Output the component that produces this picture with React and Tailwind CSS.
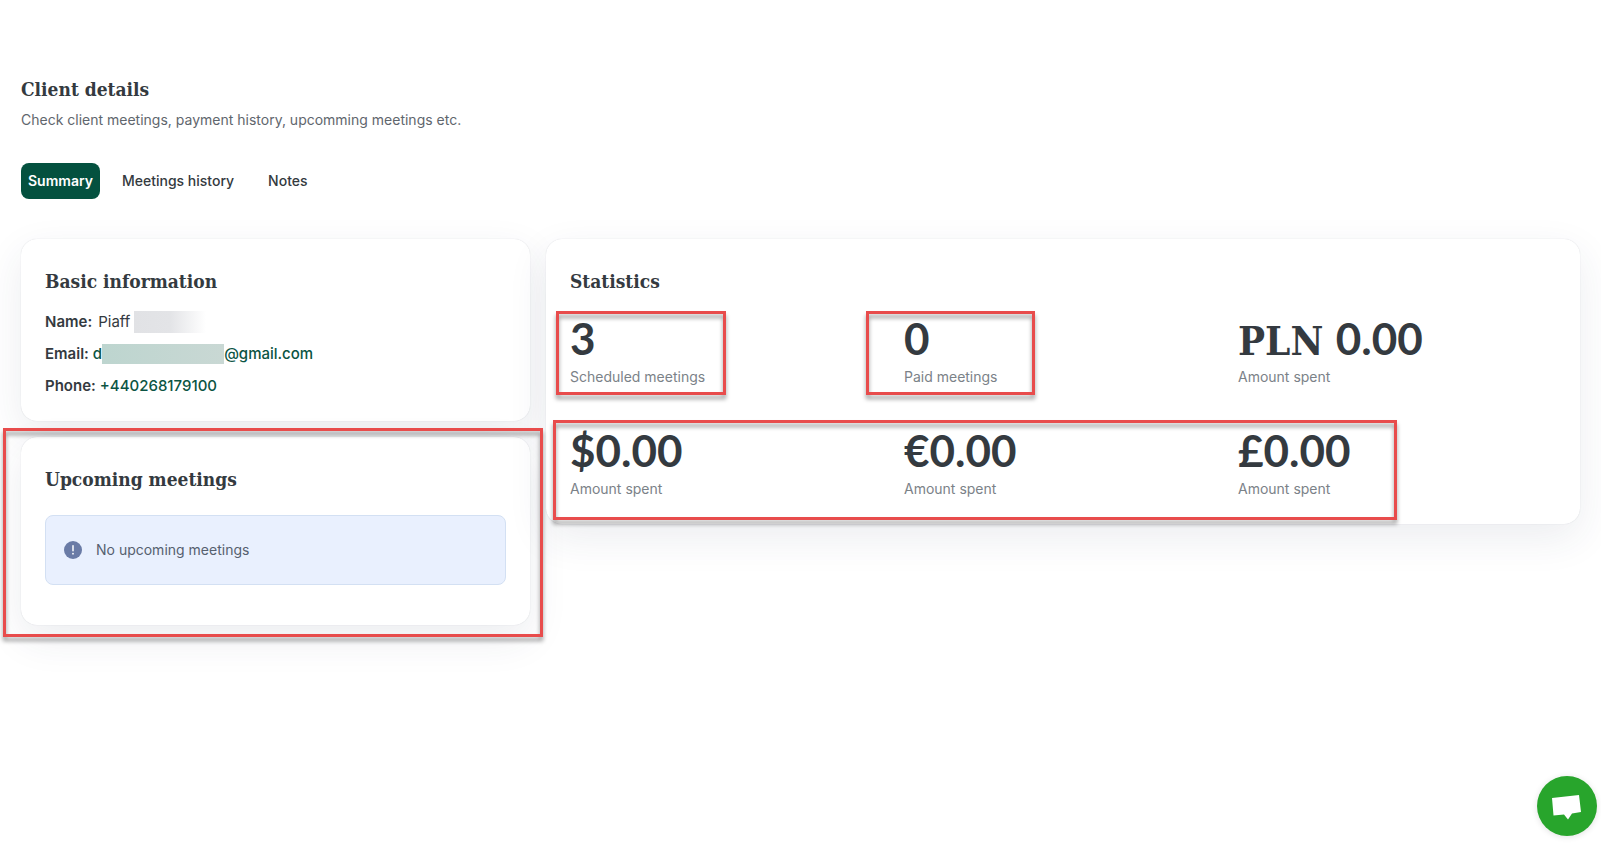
import { useState } from 'react';

const tabs = ['Summary', 'Meetings history', 'Notes'];

const stats = [
  { currency: '', value: '3', label: 'Scheduled meetings', marked: 'scheduled' },
  { currency: '', value: '0', label: 'Paid meetings', marked: 'paid' },
  { currency: 'PLN ', value: '0.00', label: 'Amount spent' },
  { currency: '', value: '$0.00', label: 'Amount spent' },
  { currency: '', value: '€0.00', label: 'Amount spent' },
  { currency: '', value: '£0.00', label: 'Amount spent' },
];

const Highlight = ({ className }) => (
  <div
    aria-hidden="true"
    className={`pointer-events-none absolute z-10 border-3 border-[#e84c4c] drop-shadow-[0_4px_2px_rgba(0,0,0,0.4)] ${className}`}
  />
);

const Card = ({ className, children }) => (
  <section className={`relative rounded-2xl bg-white px-6 shadow-[0_0_1px_rgba(30,40,70,0.2),0_14px_40px_rgba(40,50,85,0.09)] ${className}`}>
    {children}
  </section>
);

const CardTitle = ({ children }) => (
  <h2 className="font-['DejaVu_Serif_Condensed','DejaVu_Serif',serif] text-[19px] leading-7 font-bold text-[#343a40]">
    {children}
  </h2>
);

const Stat = ({ currency, value, label, marked }) => (
  <div className="relative">
    {marked === 'scheduled' && <Highlight className="-top-1 -left-3.5 h-[84px] w-[170px]" />}
    {marked === 'paid' && <Highlight className="-top-1 -left-[38px] h-[84px] w-[169px]" />}
    <p className="font-['Lato',sans-serif] text-[44px] leading-[46px] font-bold whitespace-pre text-[#343a40]">
      {currency && (
        <span className="font-['DejaVu_Serif_Condensed','DejaVu_Serif',serif] text-[40px] leading-none">{currency}</span>
      )}
      {value}
    </p>
    <p className="mt-1 text-sm leading-6 text-[#7b8288]">{label}</p>
  </div>
);

export default function App() {
  const [activeTab, setActiveTab] = useState('Summary');

  return (
    <main className="min-h-screen bg-white px-[21px] pt-[75px] pb-10 font-['Inter',sans-serif] text-[#343a40]">
      <h1 className="font-['DejaVu_Serif_Condensed','DejaVu_Serif',serif] text-[19px] leading-7 font-bold">
        Client details
      </h1>
      <p className="mt-1 text-sm leading-[26px] text-[#5f666d]">
        Check client meetings, payment history, upcomming meetings etc.
      </p>

      <nav className="mt-[30px] flex gap-2.5">
        {tabs.map((tab) => (
          <button
            key={tab}
            type="button"
            onClick={() => setActiveTab(tab)}
            className={`h-9 rounded-lg text-sm ${
              tab === activeTab ? 'bg-[#04513f] px-[7px] font-semibold text-white' : 'px-3 font-medium'
            }`}
          >
            {tab}
          </button>
        ))}
      </nav>

      <div className="mt-10 grid grid-cols-12 items-start gap-4">
        <div className="col-span-4 grid gap-4">
          <Card className="pt-7 pb-[19px]">
            <CardTitle>Basic information</CardTitle>
            <dl className="mt-[11px] text-[15px] leading-8">
              <div className="flex items-center">
                <dt className="mr-1.5 font-semibold">Name:</dt>
                <dd className="flex items-center">
                  Piaff
                  <span className="ml-1 h-[22px] w-[72px] bg-linear-to-r from-[#e1e2e5] via-[#e3e4e7] to-white" />
                </dd>
              </div>
              <div className="flex items-center">
                <dt className="mr-1 font-semibold">Email:</dt>
                <dd>
                  <a href="#email" className="flex items-center font-medium text-[#0b5443]">
                    d
                    <span className="h-5 w-[122px] bg-linear-to-r from-[#bdd5cf] to-[#c9d8d4]" />
                    @gmail.com
                  </a>
                </dd>
              </div>
              <div className="flex items-center">
                <dt className="mr-1 font-semibold">Phone:</dt>
                <dd>
                  <a href="tel:+440268179100" className="font-medium text-[#0b5443]">+440268179100</a>
                </dd>
              </div>
            </dl>
          </Card>

          <Card className="pt-7 pb-10">
            <Highlight className="-top-[9px] -right-[13px] -bottom-3 -left-[18px]" />
            <CardTitle>Upcoming meetings</CardTitle>
            <div className="mt-[22px] flex h-[70px] items-center gap-3.5 rounded-lg border border-[#d3e0f3] bg-[#e9f0fe] px-[18px]">
              <svg viewBox="0 0 18 18" className="size-[18px]" aria-hidden="true">
                <circle cx="9" cy="9" r="9" fill="#6a7ba6" />
                <path d="M9 4.8v5" stroke="#fff" strokeWidth="1.5" strokeLinecap="round" />
                <circle cx="9" cy="12.7" r="0.9" fill="#fff" />
              </svg>
              <p className="text-sm text-[#56606f]">No upcoming meetings</p>
            </div>
          </Card>
        </div>

        <Card className="col-span-8 pt-7 pb-[23px]">
          <CardTitle>Statistics</CardTitle>
          <div className="relative mt-5 grid grid-cols-3 gap-x-4 gap-y-[38px]">
            {stats.map((stat) => (
              <Stat key={`${stat.currency}${stat.value}`} {...stat} />
            ))}
            <Highlight className="-bottom-[19px] -left-[17px] h-[100px] w-[844px]" />
          </div>
        </Card>
      </div>

      <button
        type="button"
        aria-label="Open chat"
        className="fixed right-1 bottom-[17px] size-[60px] rounded-full bg-[#28a52c] shadow-[0_1px_6px_rgba(0,0,0,0.12)]"
      >
        <svg viewBox="0 0 60 60" className="size-full" aria-hidden="true">
          <path d="M15 22 42 19 44 36 35 37.5 31 43.5 27 38.5 16.5 39.5Z" fill="#fff" />
        </svg>
      </button>
    </main>
  );
}
